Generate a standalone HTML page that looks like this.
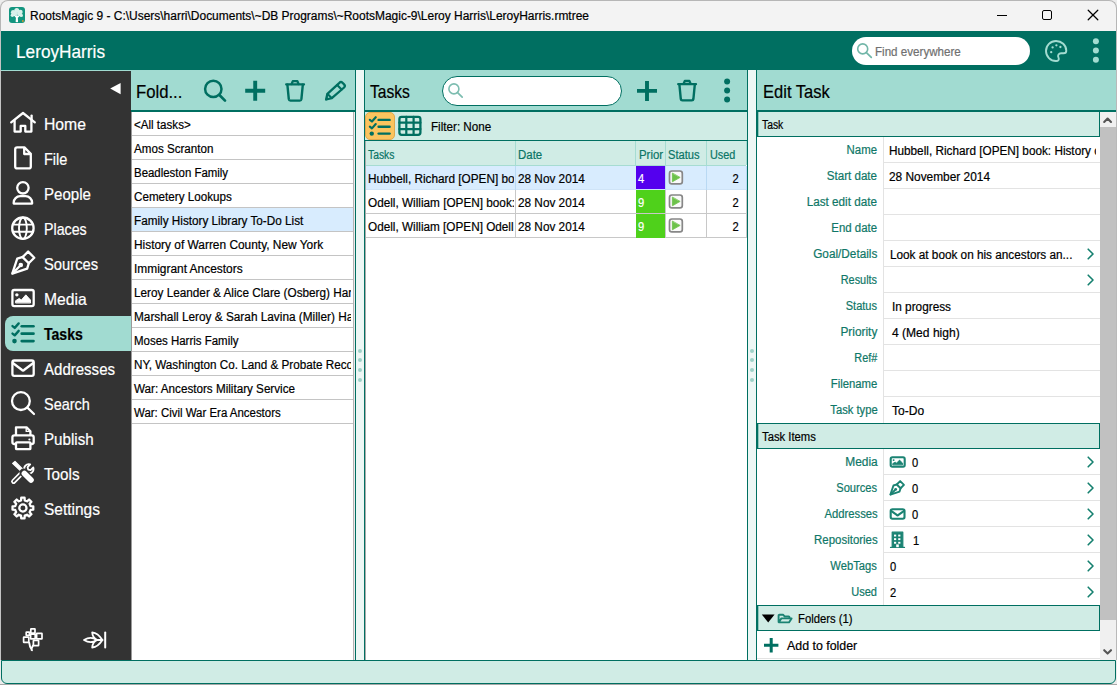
<!DOCTYPE html>
<html><head><meta charset="utf-8"><title>RootsMagic 9</title>
<style>
*{box-sizing:border-box;margin:0;padding:0}
html,body{width:1117px;height:685px;overflow:hidden;background:#ececec}
body{font-family:"Liberation Sans",sans-serif;font-size:12px;color:#000;position:relative}
.a{position:absolute}
.t{position:absolute;white-space:nowrap;line-height:1;transform-origin:0 50%;-webkit-text-stroke:0.2px}
.tr{transform-origin:100% 50%}
svg{position:absolute;overflow:visible}
</style></head><body>
<div class="a" style="left:0px;top:0px;width:1117px;height:31px;background:#f3f3f3;border:1px solid #b6b6b6;border-bottom:none;border-radius:8px 8px 0 0;"></div>
<div class="a" style="left:0px;top:31px;width:1117px;height:39px;background:#006f61;"></div>
<div class="a" style="left:0px;top:70px;width:1117px;height:1px;background:#a1dbd1;"></div>
<div class="a" style="left:0px;top:71px;width:131px;height:589px;background:#333;"></div>
<div class="a" style="left:0px;top:31px;width:1px;height:654px;background:#c4c4c4;"></div>
<div class="a" style="left:5px;top:316px;width:126px;height:35px;background:#a1dbd1;border-radius:8px 0 0 8px;"></div>
<div class="a" style="left:852px;top:37px;width:178px;height:28px;background:#fff;border-radius:14px;"></div>
<div class="a" style="left:131px;top:70px;width:224px;height:40px;background:#a1dbd1;"></div>
<div class="a" style="left:131px;top:110px;width:224px;height:2px;background:#006f61;"></div>
<div class="a" style="left:131px;top:112px;width:223px;height:548px;background:#fff;"></div>
<div class="a" style="left:355px;top:70px;width:1px;height:590px;background:#006f61;"></div>
<div class="a" style="left:353px;top:112px;width:1px;height:548px;background:#b4b4b4;"></div>
<div class="a" style="left:131px;top:112px;width:1px;height:548px;background:#9a9a9a;"></div>
<div class="a" style="left:132px;top:208px;width:221px;height:23px;background:#d8ecfe;"></div>
<div class="a" style="left:132px;top:135px;width:221px;height:1px;background:#c4c4c4;"></div>
<div class="a" style="left:132px;top:159px;width:221px;height:1px;background:#c4c4c4;"></div>
<div class="a" style="left:132px;top:183px;width:221px;height:1px;background:#c4c4c4;"></div>
<div class="a" style="left:132px;top:207px;width:221px;height:1px;background:#c4c4c4;"></div>
<div class="a" style="left:132px;top:231px;width:221px;height:1px;background:#c4c4c4;"></div>
<div class="a" style="left:132px;top:255px;width:221px;height:1px;background:#c4c4c4;"></div>
<div class="a" style="left:132px;top:279px;width:221px;height:1px;background:#c4c4c4;"></div>
<div class="a" style="left:132px;top:303px;width:221px;height:1px;background:#c4c4c4;"></div>
<div class="a" style="left:132px;top:327px;width:221px;height:1px;background:#c4c4c4;"></div>
<div class="a" style="left:132px;top:351px;width:221px;height:1px;background:#c4c4c4;"></div>
<div class="a" style="left:132px;top:375px;width:221px;height:1px;background:#c4c4c4;"></div>
<div class="a" style="left:132px;top:399px;width:221px;height:1px;background:#c4c4c4;"></div>
<div class="a" style="left:132px;top:423px;width:221px;height:1px;background:#c4c4c4;"></div>
<div class="a" style="left:356px;top:70px;width:8px;height:590px;background:#edf7f5;"></div>
<div class="a" style="left:357.7px;top:348.5px;width:4px;height:4px;background:#9fd1c8;border-radius:50%;"></div>
<div class="a" style="left:357.7px;top:358.4px;width:4px;height:4px;background:#9fd1c8;border-radius:50%;"></div>
<div class="a" style="left:357.7px;top:368.4px;width:4px;height:4px;background:#9fd1c8;border-radius:50%;"></div>
<div class="a" style="left:357.7px;top:378.4px;width:4px;height:4px;background:#9fd1c8;border-radius:50%;"></div>
<div class="a" style="left:364px;top:70px;width:1px;height:590px;background:#006f61;"></div>
<div class="a" style="left:365px;top:70px;width:382px;height:40px;background:#a1dbd1;"></div>
<div class="a" style="left:365px;top:110px;width:382px;height:2px;background:#006f61;"></div>
<div class="a" style="left:365px;top:112px;width:382px;height:28px;background:#d0ece5;"></div>
<div class="a" style="left:365px;top:140px;width:382px;height:1px;background:#006f61;"></div>
<div class="a" style="left:365px;top:141px;width:382px;height:519px;background:#fff;"></div>
<div class="a" style="left:365px;top:141px;width:1px;height:519px;background:#aaa;"></div>
<div class="a" style="left:747px;top:70px;width:1px;height:590px;background:#006f61;"></div>
<div class="a" style="left:442px;top:76px;width:180px;height:30px;background:#fff;border-radius:15px;border:1.5px solid #006f61;"></div>
<div class="a" style="left:365px;top:112px;width:30px;height:28px;background:#fbc45e;border-radius:5px;border:1px solid #e0a94f;"></div>
<div class="a" style="left:366px;top:141px;width:380px;height:24px;background:#d0ece5;"></div>
<div class="a" style="left:515px;top:141px;width:1px;height:24px;background:#a6dcd2;"></div>
<div class="a" style="left:635px;top:141px;width:1px;height:24px;background:#a6dcd2;"></div>
<div class="a" style="left:665px;top:141px;width:1px;height:24px;background:#a6dcd2;"></div>
<div class="a" style="left:706px;top:141px;width:1px;height:24px;background:#a6dcd2;"></div>
<div class="a" style="left:746px;top:141px;width:1px;height:24px;background:#a6dcd2;"></div>
<div class="a" style="left:366px;top:165px;width:380px;height:1px;background:#a6dcd2;"></div>
<div class="a" style="left:366px;top:166px;width:380px;height:23px;background:#d8ecfe;"></div>
<div class="a" style="left:366px;top:189px;width:380px;height:1px;background:#cfe4f7;"></div>
<div class="a" style="left:366px;top:213px;width:380px;height:1px;background:#c8c8c8;"></div>
<div class="a" style="left:366px;top:237px;width:380px;height:1px;background:#c8c8c8;"></div>
<div class="a" style="left:515px;top:166px;width:1px;height:24px;background:#b9d9f3;"></div>
<div class="a" style="left:515px;top:190px;width:1px;height:48px;background:#c8c8c8;"></div>
<div class="a" style="left:665px;top:166px;width:1px;height:24px;background:#b9d9f3;"></div>
<div class="a" style="left:665px;top:190px;width:1px;height:48px;background:#c8c8c8;"></div>
<div class="a" style="left:706px;top:166px;width:1px;height:24px;background:#b9d9f3;"></div>
<div class="a" style="left:706px;top:190px;width:1px;height:48px;background:#c8c8c8;"></div>
<div class="a" style="left:746px;top:166px;width:1px;height:24px;background:#b9d9f3;"></div>
<div class="a" style="left:746px;top:190px;width:1px;height:48px;background:#c8c8c8;"></div>
<div class="a" style="left:636px;top:166px;width:29px;height:23px;background:#5400ee;"></div>
<div class="a" style="left:636px;top:190px;width:29px;height:23px;background:#4fd11b;"></div>
<div class="a" style="left:636px;top:214px;width:29px;height:24px;background:#4fd11b;"></div>
<div class="a" style="left:748px;top:70px;width:8px;height:590px;background:#edf7f5;"></div>
<div class="a" style="left:749.7px;top:348.5px;width:4px;height:4px;background:#9fd1c8;border-radius:50%;"></div>
<div class="a" style="left:749.7px;top:358.4px;width:4px;height:4px;background:#9fd1c8;border-radius:50%;"></div>
<div class="a" style="left:749.7px;top:368.4px;width:4px;height:4px;background:#9fd1c8;border-radius:50%;"></div>
<div class="a" style="left:749.7px;top:378.4px;width:4px;height:4px;background:#9fd1c8;border-radius:50%;"></div>
<div class="a" style="left:756px;top:70px;width:1px;height:590px;background:#006f61;"></div>
<div class="a" style="left:757px;top:70px;width:360px;height:40px;background:#a1dbd1;"></div>
<div class="a" style="left:757px;top:110px;width:360px;height:2px;background:#006f61;"></div>
<div class="a" style="left:757px;top:112px;width:343px;height:548px;background:#fff;"></div>
<div class="a" style="left:757px;top:112px;width:343px;height:25px;background:#d0ece5;border:1px solid #006f61;border-top:none;"></div>
<div class="a" style="left:758px;top:112px;width:1px;height:24px;background:#8fc7bd;"></div>
<div class="a" style="left:757px;top:423px;width:343px;height:26px;background:#d0ece5;border:1px solid #006f61;"></div>
<div class="a" style="left:758px;top:424px;width:1px;height:24px;background:#8fc7bd;"></div>
<div class="a" style="left:757px;top:605px;width:343px;height:26px;background:#d0ece5;border:1px solid #006f61;"></div>
<div class="a" style="left:758px;top:606px;width:1px;height:24px;background:#8fc7bd;"></div>
<div class="a" style="left:883px;top:162px;width:217px;height:1px;background:#e3e3e3;"></div>
<div class="a" style="left:883px;top:188px;width:217px;height:1px;background:#e3e3e3;"></div>
<div class="a" style="left:883px;top:214px;width:217px;height:1px;background:#e3e3e3;"></div>
<div class="a" style="left:883px;top:240px;width:217px;height:1px;background:#e3e3e3;"></div>
<div class="a" style="left:883px;top:266px;width:217px;height:1px;background:#e3e3e3;"></div>
<div class="a" style="left:883px;top:292px;width:217px;height:1px;background:#e3e3e3;"></div>
<div class="a" style="left:883px;top:318px;width:217px;height:1px;background:#e3e3e3;"></div>
<div class="a" style="left:883px;top:344px;width:217px;height:1px;background:#e3e3e3;"></div>
<div class="a" style="left:883px;top:370px;width:217px;height:1px;background:#e3e3e3;"></div>
<div class="a" style="left:883px;top:396px;width:217px;height:1px;background:#e3e3e3;"></div>
<div class="a" style="left:883px;top:137px;width:1px;height:286px;background:#e3e3e3;"></div>
<div class="a" style="left:883px;top:474px;width:217px;height:1px;background:#e3e3e3;"></div>
<div class="a" style="left:883px;top:500px;width:217px;height:1px;background:#e3e3e3;"></div>
<div class="a" style="left:883px;top:526px;width:217px;height:1px;background:#e3e3e3;"></div>
<div class="a" style="left:883px;top:552px;width:217px;height:1px;background:#e3e3e3;"></div>
<div class="a" style="left:883px;top:578px;width:217px;height:1px;background:#e3e3e3;"></div>
<div class="a" style="left:883px;top:449px;width:1px;height:156px;background:#e3e3e3;"></div>
<div class="a" style="left:757px;top:658px;width:343px;height:1px;background:#e3e3e3;"></div>
<div class="a" style="left:1100px;top:112px;width:16px;height:548px;background:#f0f0f0;"></div>
<div class="a" style="left:1100px;top:127px;width:16px;height:493px;background:#c1c1c1;"></div>
<div class="a" style="left:1116px;top:31px;width:1px;height:654px;background:#b9b9b9;"></div>
<div class="a" style="left:0px;top:660px;width:1117px;height:25px;background:#ececec;"></div>
<div class="a" style="left:1px;top:660px;width:1115px;height:24px;background:#d0ece5;border:1px solid #006f61;border-radius:0 0 6px 6px;"></div>
<div class="a" style="left:0px;top:684px;width:1117px;height:1px;background:#a8a8a8;"></div>
<span class="t" id="t0" style="top:10.00px;font-size:12px;color:#000;left:30.00px;transform:scaleX(0.9967);">RootsMagic 9 - C:\Users\harri\Documents\~DB Programs\~RootsMagic-9\Leroy Harris\LeroyHarris.rmtree</span>
<span class="t" id="t1" style="top:43.00px;font-size:18.5px;color:#fff;left:16.40px;transform:scaleX(0.9309);">LeroyHarris</span>
<span class="t" id="t2" style="top:46.00px;font-size:12px;color:#707070;left:874.90px;transform:scaleX(0.9671);">Find everywhere</span>
<span class="t" id="t3" style="top:116.00px;font-size:16.2px;color:#fff;left:43.70px;transform:scaleX(0.9725);">Home</span>
<span class="t" id="t4" style="top:151.00px;font-size:16.2px;color:#fff;left:43.70px;transform:scaleX(0.8968);">File</span>
<span class="t" id="t5" style="top:186.00px;font-size:16.2px;color:#fff;left:43.70px;transform:scaleX(0.9304);">People</span>
<span class="t" id="t6" style="top:221.00px;font-size:16.2px;color:#fff;left:43.70px;transform:scaleX(0.8787);">Places</span>
<span class="t" id="t7" style="top:256.00px;font-size:16.2px;color:#fff;left:43.70px;transform:scaleX(0.9109);">Sources</span>
<span class="t" id="t8" style="top:291.00px;font-size:16.2px;color:#fff;left:43.70px;transform:scaleX(0.9684);">Media</span>
<span class="t" id="t9" style="top:326.00px;font-size:16.2px;color:#000;font-weight:bold;left:43.80px;transform:scaleX(0.8679);">Tasks</span>
<span class="t" id="t10" style="top:361.00px;font-size:16.2px;color:#fff;left:43.70px;transform:scaleX(0.9283);">Addresses</span>
<span class="t" id="t11" style="top:396.00px;font-size:16.2px;color:#fff;left:43.70px;transform:scaleX(0.8928);">Search</span>
<span class="t" id="t12" style="top:431.00px;font-size:16.2px;color:#fff;left:43.70px;transform:scaleX(0.9361);">Publish</span>
<span class="t" id="t13" style="top:466.00px;font-size:16.2px;color:#fff;left:43.70px;transform:scaleX(0.9392);">Tools</span>
<span class="t" id="t14" style="top:501.00px;font-size:16.2px;color:#fff;left:43.70px;transform:scaleX(0.9556);">Settings</span>
<span class="t" id="t15" style="top:83.00px;font-size:18.5px;color:#000;left:136.20px;transform:scaleX(0.9023);">Fold...</span>
<div class="a" style="left:132px;top:116.00px;width:219px;height:20px;overflow:hidden"><span class="t" id="t16" style="top:3.00px;font-size:12px;color:#000;left:1.70px;transform:scaleX(0.9659);">&lt;All tasks&gt;</span></div>
<div class="a" style="left:132px;top:140.00px;width:219px;height:20px;overflow:hidden"><span class="t" id="t17" style="top:3.00px;font-size:12px;color:#000;left:1.70px;transform:scaleX(0.9677);">Amos Scranton</span></div>
<div class="a" style="left:132px;top:164.00px;width:219px;height:20px;overflow:hidden"><span class="t" id="t18" style="top:3.00px;font-size:12px;color:#000;left:1.70px;transform:scaleX(0.9532);">Beadleston Family</span></div>
<div class="a" style="left:132px;top:188.00px;width:219px;height:20px;overflow:hidden"><span class="t" id="t19" style="top:3.00px;font-size:12px;color:#000;left:1.70px;transform:scaleX(0.9710);">Cemetery Lookups</span></div>
<div class="a" style="left:132px;top:212.00px;width:219px;height:20px;overflow:hidden"><span class="t" id="t20" style="top:3.00px;font-size:12px;color:#000;left:1.70px;transform:scaleX(0.9777);">Family History Library To-Do List</span></div>
<div class="a" style="left:132px;top:236.00px;width:219px;height:20px;overflow:hidden"><span class="t" id="t21" style="top:3.00px;font-size:12px;color:#000;left:1.70px;transform:scaleX(0.9914);">History of Warren County, New York</span></div>
<div class="a" style="left:132px;top:260.00px;width:219px;height:20px;overflow:hidden"><span class="t" id="t22" style="top:3.00px;font-size:12px;color:#000;left:1.70px;transform:scaleX(0.9929);">Immigrant Ancestors</span></div>
<div class="a" style="left:132px;top:284.00px;width:219px;height:20px;overflow:hidden"><span class="t" id="t23" style="top:3.00px;font-size:12px;color:#000;left:1.70px;transform:scaleX(0.9794);">Leroy Leander &amp; Alice Clare (Osberg) Harris</span></div>
<div class="a" style="left:132px;top:308.00px;width:219px;height:20px;overflow:hidden"><span class="t" id="t24" style="top:3.00px;font-size:12px;color:#000;left:1.70px;transform:scaleX(0.9845);">Marshall Leroy &amp; Sarah Lavina (Miller) Harris</span></div>
<div class="a" style="left:132px;top:332.00px;width:219px;height:20px;overflow:hidden"><span class="t" id="t25" style="top:3.00px;font-size:12px;color:#000;left:1.70px;transform:scaleX(0.9557);">Moses Harris Family</span></div>
<div class="a" style="left:132px;top:356.00px;width:219px;height:20px;overflow:hidden"><span class="t" id="t26" style="top:3.00px;font-size:12px;color:#000;left:1.70px;transform:scaleX(0.9741);">NY, Washington Co. Land &amp; Probate Records</span></div>
<div class="a" style="left:132px;top:380.00px;width:219px;height:20px;overflow:hidden"><span class="t" id="t27" style="top:3.00px;font-size:12px;color:#000;left:1.70px;transform:scaleX(0.9723);">War: Ancestors Military Service</span></div>
<div class="a" style="left:132px;top:404.00px;width:219px;height:20px;overflow:hidden"><span class="t" id="t28" style="top:3.00px;font-size:12px;color:#000;left:1.70px;transform:scaleX(0.9538);">War: Civil War Era Ancestors</span></div>
<span class="t" id="t29" style="top:83.00px;font-size:18.5px;color:#000;left:370.30px;transform:scaleX(0.8436);">Tasks</span>
<span class="t" id="t30" style="top:121.00px;font-size:12px;color:#000;left:431.20px;transform:scaleX(0.9705);">Filter: None</span>
<span class="t" id="t31" style="top:149.00px;font-size:12px;color:#0a7566;left:368.20px;transform:scaleX(0.8635);">Tasks</span>
<span class="t" id="t32" style="top:149.00px;font-size:12px;color:#0a7566;left:518.20px;transform:scaleX(0.9543);">Date</span>
<span class="t" id="t33" style="top:149.00px;font-size:12px;color:#0a7566;left:638.60px;transform:scaleX(0.9509);">Prior</span>
<span class="t" id="t34" style="top:149.00px;font-size:12px;color:#0a7566;left:668.30px;transform:scaleX(0.9286);">Status</span>
<span class="t" id="t35" style="top:149.00px;font-size:12px;color:#0a7566;left:709.60px;transform:scaleX(0.9066);">Used</span>
<div class="a" style="left:366px;top:170.00px;width:148px;height:20px;overflow:hidden"><span class="t" id="t36" style="top:3.00px;font-size:12px;color:#000;left:2.00px;transform:scaleX(0.9812);">Hubbell, Richard [OPEN] book: History</span></div>
<span class="t" id="t37" style="top:173.00px;font-size:12px;color:#000;left:518.10px;transform:scaleX(0.9815);">28 Nov 2014</span>
<span class="t" id="t38" style="top:173.00px;font-size:12px;color:#fff;left:638.00px;transform:scaleX(0.9300);">4</span>
<span class="t tr" id="t39" style="top:173.00px;font-size:12px;color:#000;right:378.40px;transform:scaleX(0.9300);">2</span>
<div class="a" style="left:366px;top:194.00px;width:148px;height:20px;overflow:hidden"><span class="t" id="t40" style="top:3.00px;font-size:12px;color:#000;left:2.00px;transform:scaleX(0.9801);">Odell, William [OPEN] book: History</span></div>
<span class="t" id="t41" style="top:197.00px;font-size:12px;color:#000;left:518.10px;transform:scaleX(0.9815);">28 Nov 2014</span>
<span class="t" id="t42" style="top:197.00px;font-size:12px;color:#fff;left:638.00px;transform:scaleX(0.9300);">9</span>
<span class="t tr" id="t43" style="top:197.00px;font-size:12px;color:#000;right:378.40px;transform:scaleX(0.9300);">2</span>
<div class="a" style="left:366px;top:218.00px;width:148px;height:20px;overflow:hidden"><span class="t" id="t44" style="top:3.00px;font-size:12px;color:#000;left:2.00px;transform:scaleX(0.9791);">Odell, William [OPEN] Odell Genealogy</span></div>
<span class="t" id="t45" style="top:221.00px;font-size:12px;color:#000;left:518.10px;transform:scaleX(0.9815);">28 Nov 2014</span>
<span class="t" id="t46" style="top:221.00px;font-size:12px;color:#fff;left:638.00px;transform:scaleX(0.9300);">9</span>
<span class="t tr" id="t47" style="top:221.00px;font-size:12px;color:#000;right:378.40px;transform:scaleX(0.9300);">2</span>
<span class="t" id="t48" style="top:83.00px;font-size:18.5px;color:#000;left:763.00px;transform:scaleX(0.8938);">Edit Task</span>
<span class="t" id="t49" style="top:119.00px;font-size:12px;color:#000;left:762.30px;transform:scaleX(0.8628);">Task</span>
<span class="t" id="t50" style="top:431.00px;font-size:12px;color:#000;left:762.30px;transform:scaleX(0.9397);">Task Items</span>
<span class="t" id="t51" style="top:613.00px;font-size:12px;color:#000;left:798.40px;transform:scaleX(0.9394);">Folders (1)</span>
<span class="t" id="t52" style="top:640.00px;font-size:12px;color:#000;left:787.40px;transform:scaleX(1.0316);">Add to folder</span>
<span class="t tr" id="t53" style="top:144.00px;font-size:12px;color:#0f7767;right:239.80px;transform:scaleX(0.9495);">Name</span>
<span class="t tr" id="t54" style="top:170.00px;font-size:12px;color:#0f7767;right:239.80px;transform:scaleX(0.9667);">Start date</span>
<span class="t tr" id="t55" style="top:196.00px;font-size:12px;color:#0f7767;right:239.80px;transform:scaleX(0.9769);">Last edit date</span>
<span class="t tr" id="t56" style="top:222.00px;font-size:12px;color:#0f7767;right:239.80px;transform:scaleX(0.9512);">End date</span>
<span class="t tr" id="t57" style="top:248.00px;font-size:12px;color:#0f7767;right:239.80px;transform:scaleX(0.9820);">Goal/Details</span>
<span class="t tr" id="t58" style="top:274.00px;font-size:12px;color:#0f7767;right:239.80px;transform:scaleX(0.9071);">Results</span>
<span class="t tr" id="t59" style="top:300.00px;font-size:12px;color:#0f7767;right:239.80px;transform:scaleX(0.9197);">Status</span>
<span class="t tr" id="t60" style="top:326.00px;font-size:12px;color:#0f7767;right:239.80px;transform:scaleX(0.9881);">Priority</span>
<span class="t tr" id="t61" style="top:352.00px;font-size:12px;color:#0f7767;right:239.80px;transform:scaleX(0.9070);">Ref#</span>
<span class="t tr" id="t62" style="top:378.00px;font-size:12px;color:#0f7767;right:239.80px;transform:scaleX(0.9441);">Filename</span>
<span class="t tr" id="t63" style="top:404.00px;font-size:12px;color:#0f7767;right:239.80px;transform:scaleX(0.9349);">Task type</span>
<span class="t tr" id="t64" style="top:456.00px;font-size:12px;color:#0f7767;right:239.80px;transform:scaleX(0.9943);">Media</span>
<span class="t tr" id="t65" style="top:482.00px;font-size:12px;color:#0f7767;right:239.80px;transform:scaleX(0.9266);">Sources</span>
<span class="t tr" id="t66" style="top:508.00px;font-size:12px;color:#0f7767;right:239.80px;transform:scaleX(0.9382);">Addresses</span>
<span class="t tr" id="t67" style="top:534.00px;font-size:12px;color:#0f7767;right:239.80px;transform:scaleX(0.9535);">Repositories</span>
<span class="t tr" id="t68" style="top:560.00px;font-size:12px;color:#0f7767;right:239.80px;transform:scaleX(0.9335);">WebTags</span>
<span class="t tr" id="t69" style="top:586.00px;font-size:12px;color:#0f7767;right:239.80px;transform:scaleX(0.9209);">Used</span>
<div class="a" style="left:884px;top:142.00px;width:212px;height:20px;overflow:hidden"><span class="t" id="t70" style="top:3.00px;font-size:12px;color:#000;left:4.50px;transform:scaleX(0.9801);">Hubbell, Richard [OPEN] book: History of</span></div>
<span class="t" id="t71" style="top:171.00px;font-size:12px;color:#000;left:888.50px;transform:scaleX(0.9894);">28 November 2014</span>
<span class="t" id="t72" style="top:249.00px;font-size:12px;color:#000;left:889.60px;transform:scaleX(0.9800);">Look at book on his ancestors an...</span>
<span class="t" id="t73" style="top:301.00px;font-size:12px;color:#000;left:892.10px;transform:scaleX(0.9828);">In progress</span>
<span class="t" id="t74" style="top:327.00px;font-size:12px;color:#000;left:892.10px;transform:scaleX(1.0048);">4 (Med high)</span>
<span class="t" id="t75" style="top:405.00px;font-size:12px;color:#000;left:892.10px;transform:scaleX(1.0026);">To-Do</span>
<span class="t" id="t76" style="top:457.00px;font-size:12px;color:#000;left:912.00px;transform:scaleX(0.9300);">0</span>
<span class="t" id="t77" style="top:483.00px;font-size:12px;color:#000;left:912.00px;transform:scaleX(0.9300);">0</span>
<span class="t" id="t78" style="top:509.00px;font-size:12px;color:#000;left:912.00px;transform:scaleX(0.9300);">0</span>
<span class="t" id="t79" style="top:535.00px;font-size:12px;color:#000;left:912.50px;transform:scaleX(0.9300);">1</span>
<span class="t" id="t80" style="top:561.00px;font-size:12px;color:#000;left:889.60px;transform:scaleX(0.9300);">0</span>
<span class="t" id="t81" style="top:587.00px;font-size:12px;color:#000;left:889.60px;transform:scaleX(0.9300);">2</span>
<svg width="1117" height="685" viewBox="0 0 1117 685" style="left:0;top:0"><rect x="9" y="7" width="16" height="16" rx="3" fill="#12957f"/>
<path d="M16.3,21.5 L16.6,17.5 L14,14.5 M17.4,21.5 L17.2,17.5 L20,14.8 M16.9,17.5 V13" fill="none" stroke="#fff" stroke-width="1.3" stroke-linecap="round" stroke-linejoin="round" />
<circle cx="13.2" cy="12.2" r="2.3" fill="#d8f0ea"/>
<circle cx="16.8" cy="10.6" r="2.5" fill="#d8f0ea"/>
<circle cx="20.4" cy="12" r="2.3" fill="#d8f0ea"/>
<circle cx="12.4" cy="15.3" r="1.7" fill="#d8f0ea"/>
<circle cx="21.3" cy="15.4" r="1.7" fill="#d8f0ea"/>
<circle cx="15" cy="13.5" r="1.8" fill="#d8f0ea"/>
<circle cx="19" cy="13.6" r="1.8" fill="#d8f0ea"/>
<rect x="22" y="20.2" width="1.6" height="1.6" rx="0" fill="#d89a2b"/>
<path d="M997,15.5 H1007" fill="none" stroke="#000" stroke-width="1" stroke-linecap="round" stroke-linejoin="round" shape-rendering="crispEdges"/>
<rect x="1042.5" y="10.5" width="9" height="9" rx="1.5" fill="none" stroke="#000" stroke-width="1"/>
<path d="M1088.2,10.2 L1097.8,19.8 M1097.8,10.2 L1088.2,19.8" fill="none" stroke="#000" stroke-width="1.25" stroke-linecap="round" stroke-linejoin="round" />
<circle cx="862.7" cy="48.9" r="5" fill="none" stroke="#72b6a8" stroke-width="1.6"/>
<path d="M866.4,52.6 L871.3,57.4" fill="none" stroke="#72b6a8" stroke-width="1.7" stroke-linecap="round" stroke-linejoin="round" />
<path d="M1056,41 a10,10 0 1 0 0,20 c2.6,0 3.3,-1.8 2.5,-3.4 c-1.2,-2.4 0.3,-4.3 2.6,-4.3 h2.4 c1.7,0 2.8,-1.1 2.8,-2.6 C1066.3,45.2 1061.6,41 1056,41 Z" fill="none" stroke="#a3dcd1" stroke-width="1.9" stroke-linecap="round" stroke-linejoin="round" />
<circle cx="1051.2" cy="52.2" r="1.15" fill="#a3dcd1"/>
<circle cx="1052.6" cy="47.4" r="1.15" fill="#a3dcd1"/>
<circle cx="1056.4" cy="45.3" r="1.15" fill="#a3dcd1"/>
<circle cx="1060.4" cy="47" r="1.15" fill="#a3dcd1"/>
<circle cx="1095.9" cy="41.3" r="3" fill="#a3dcd1"/>
<circle cx="1095.9" cy="50.5" r="3" fill="#a3dcd1"/>
<circle cx="1095.9" cy="59.7" r="3" fill="#a3dcd1"/>
<path d="M110.2,88.6 L120.6,83 V94.2 Z" fill="#fff" />
<path d="M11.2,122.4 L23,113 L34.8,122.4" fill="none" stroke="#fff" stroke-width="2.3" stroke-linecap="round" stroke-linejoin="round" />
<path d="M14.6,120.6 V131.6 H20.7 V125.9 H25.3 V131.6 H31.4 V120.6" fill="none" stroke="#fff" stroke-width="2.3" stroke-linecap="round" stroke-linejoin="round" />
<path d="M31.6,119.4 V115.6" fill="none" stroke="#fff" stroke-width="2.3" stroke-linecap="round" stroke-linejoin="round" />
<path d="M17.2,147.4 H24.4 L30.8,153.8 V166.4 a2,2 0 0 1 -2,2 H17.2 a2,2 0 0 1 -2,-2 V149.4 a2,2 0 0 1 2,-2 Z M24.2,147.6 V154 H30.6" fill="none" stroke="#fff" stroke-width="2.3" stroke-linecap="round" stroke-linejoin="round" />
<circle cx="22.9" cy="187.8" r="5.7" fill="none" stroke="#fff" stroke-width="2.3"/>
<path d="M13.7,203.6 V202.6 a6.4,6.4 0 0 1 6.4,-6.4 H25.7 a6.4,6.4 0 0 1 6.4,6.4 V203.6 Z" fill="none" stroke="#fff" stroke-width="2.3" stroke-linecap="round" stroke-linejoin="round" />
<circle cx="22.9" cy="228.2" r="10.7" fill="none" stroke="#fff" stroke-width="2.3"/>
<ellipse cx="22.9" cy="228.2" rx="3.9" ry="10.7" fill="none" stroke="#fff" stroke-width="1.9"/>
<path d="M13,224.6 H32.8 M13,231.8 H32.8" fill="none" stroke="#fff" stroke-width="1.9" stroke-linecap="round" stroke-linejoin="round" />
<path d="M28.13,251.59 L34.27,257.73 L28.72,263.27 L22.59,257.14 Z" fill="none" stroke="#fff" stroke-width="2.3" stroke-linecap="round" stroke-linejoin="round" />
<path d="M22.98,256.94 L17.24,258.72 L12.29,273.57 L27.14,268.62 L28.92,262.88" fill="none" stroke="#fff" stroke-width="2.3" stroke-linecap="round" stroke-linejoin="round" />
<path d="M12.69,273.17 L19.42,266.44" fill="none" stroke="#fff" stroke-width="2.3" stroke-linecap="round" stroke-linejoin="round" />
<circle cx="20.804000000000002" cy="265.05600000000004" r="2.2769999999999997" fill="#fff"/>
<rect x="12.4" y="290" width="21.3" height="16.2" rx="1.8399999999999999" fill="none" stroke="#fff" stroke-width="2.3"/>
<circle cx="16.873" cy="294.86" r="1.7009999999999998" fill="#fff"/>
<path d="M15.60,302.64 L15.60,300.69 L19.22,298.42 L21.35,300.04 L25.82,294.86 L30.51,300.04 L30.51,302.64 Z" fill="#fff" stroke="#fff" stroke-width="0.9199999999999999" stroke-linecap="round" stroke-linejoin="round" />
<path d="M21.70,326.20 H33.50" fill="none" stroke="#006f61" stroke-width="2.6" stroke-linecap="round" stroke-linejoin="round" />
<path d="M21.70,333.65 H33.50" fill="none" stroke="#006f61" stroke-width="2.6" stroke-linecap="round" stroke-linejoin="round" />
<path d="M21.70,341.10 H33.50" fill="none" stroke="#006f61" stroke-width="2.6" stroke-linecap="round" stroke-linejoin="round" />
<path d="M12.50,326.10 L14.70,327.90 L18.70,323.40" fill="none" stroke="#006f61" stroke-width="2.3400000000000003" stroke-linecap="round" stroke-linejoin="round" />
<path d="M12.50,333.55 L14.70,335.35 L18.70,330.85" fill="none" stroke="#006f61" stroke-width="2.3400000000000003" stroke-linecap="round" stroke-linejoin="round" />
<circle cx="14.5" cy="341.09999999999997" r="2.3" fill="#006f61"/>
<rect x="12.4" y="360.5" width="21.3" height="15.4" rx="1.8399999999999999" fill="none" stroke="#fff" stroke-width="2.3"/>
<path d="M12.80,362.96 L21.77,369.74 Q23.05,371.28 24.33,369.74 L33.30,362.96" fill="none" stroke="#fff" stroke-width="2.3" stroke-linecap="round" stroke-linejoin="round" />
<circle cx="20.9" cy="401.1" r="8.9" fill="none" stroke="#fff" stroke-width="2.3"/>
<path d="M27.4,407.6 L34,414" fill="none" stroke="#fff" stroke-width="2.2" stroke-linecap="round" stroke-linejoin="round" />
<path d="M16,434.8 V427.4 H26.6 L30.4,431.2 V434.8" fill="none" stroke="#fff" stroke-width="2.3" stroke-linecap="round" stroke-linejoin="round" />
<path d="M26.2,427.6 V431.4 H30.2" fill="none" stroke="#fff" stroke-width="1.4" stroke-linecap="round" stroke-linejoin="round" />
<rect x="12.4" y="435.4" width="21.3" height="8.6" rx="2" fill="none" stroke="#fff" stroke-width="2.3"/>
<rect x="16" y="442.4" width="14.4" height="6.8" rx="0.8" fill="#333" stroke="#fff" stroke-width="2.3"/>
<circle cx="29.4" cy="439.5" r="1.1" fill="#fff"/>
<path d="M13.6,481.4 L22.2,472.8" fill="none" stroke="#fff" stroke-width="5" stroke-linecap="round" stroke-linejoin="round" />
<path d="M13.6,481.4 L22.2,472.8" fill="none" stroke="#333" stroke-width="1.6" stroke-linecap="round" stroke-linejoin="round" />
<path d="M24.6,470.6 a4.6,4.6 0 0 1 5.6,-6.2 l-2.6,2.8 l0.6,2.4 l2.4,0.6 l2.7,-2.7 a4.6,4.6 0 0 1 -6.1,5.7 Z" fill="none" stroke="#fff" stroke-width="1.8" stroke-linecap="round" stroke-linejoin="round" />
<path d="M12.6,463.4 L15,461.4 L24,470.4 L22.4,472.6 Z" fill="#fff" stroke="#fff" stroke-width="1.2" stroke-linecap="round" stroke-linejoin="round" />
<path d="M23.6,472.6 L31.6,480.6" fill="none" stroke="#333" stroke-width="8.4" stroke-linecap="round" stroke-linejoin="round" />
<path d="M24.4,473.4 L31,480" fill="none" stroke="#fff" stroke-width="5.6" stroke-linecap="round" stroke-linejoin="round" />
<path d="M21.26,497.63 L24.54,497.63 L24.74,500.32 L27.03,501.26 L29.07,499.51 L31.39,501.83 L29.64,503.87 L30.58,506.16 L33.27,506.36 L33.27,509.64 L30.58,509.84 L29.64,512.13 L31.39,514.17 L29.07,516.49 L27.03,514.74 L24.74,515.68 L24.54,518.37 L21.26,518.37 L21.06,515.68 L18.77,514.74 L16.73,516.49 L14.41,514.17 L16.16,512.13 L15.22,509.84 L12.53,509.64 L12.53,506.36 L15.22,506.16 L16.16,503.87 L14.41,501.83 L16.73,499.51 L18.77,501.26 L21.06,500.32 Z" fill="none" stroke="#fff" stroke-width="2.3" stroke-linecap="round" stroke-linejoin="round" />
<circle cx="22.9" cy="508" r="3.6" fill="none" stroke="#fff" stroke-width="2.3"/>
<rect x="30.8" y="628.9" width="4.2" height="4.2" rx="0.4" fill="none" stroke="#fff" stroke-width="1.7"/>
<rect x="26.2" y="632.2" width="3.2" height="3.2" rx="0.4" fill="none" stroke="#fff" stroke-width="1.7"/>
<rect x="36.6" y="633.4" width="5.4" height="5.4" rx="0.4" fill="none" stroke="#fff" stroke-width="1.7"/>
<rect x="23.6" y="637.2" width="5.2" height="5.2" rx="0.4" fill="none" stroke="#fff" stroke-width="1.7"/>
<rect x="30.6" y="634.2" width="4.6" height="4.6" rx="0.4" fill="none" stroke="#fff" stroke-width="1.7"/>
<rect x="33.4" y="640.4" width="5.2" height="5.2" rx="0.4" fill="none" stroke="#fff" stroke-width="1.7"/>
<path d="M29.2,642.6 Q29.6,647.4 32,650.2 M33,645.6 Q31.2,648 31.6,650" fill="none" stroke="#fff" stroke-width="1.9" stroke-linecap="round" stroke-linejoin="round" />
<path d="M105.2,632.4 V647.6" fill="none" stroke="#fff" stroke-width="2" stroke-linecap="round" stroke-linejoin="round" />
<path d="M102.6,640 H97 M102.4,640 C99.6,635.6 96.4,632.8 92.2,632.4 C92.4,636 94.2,638.8 97.4,640 C94.2,641.2 92.4,644 92.2,647.6 C96.4,647.2 99.6,644.4 102.4,640 M96.6,640 C93,637.4 88,637.6 84,640 C88,642.4 93,642.6 96.6,640" fill="none" stroke="#fff" stroke-width="1.8" stroke-linecap="round" stroke-linejoin="round" />
<circle cx="213.3" cy="88.9" r="8.2" fill="none" stroke="#006f61" stroke-width="2.5"/>
<path d="M219.4,95 L225,100.6" fill="none" stroke="#006f61" stroke-width="2.7" stroke-linecap="round" stroke-linejoin="round" />
<path d="M245.2,90.8 H265.2 M255.2,80.8 V100.8" fill="none" stroke="#006f61" stroke-width="3.9" stroke-linecap="butt"/>
<path d="M286.2,84.4 H304" fill="none" stroke="#006f61" stroke-width="2.3" stroke-linecap="round" stroke-linejoin="round" />
<path d="M291.6,84.0 L292.8,81.2 H297.4 L298.6,84.0" fill="none" stroke="#006f61" stroke-width="2.3" stroke-linecap="round" stroke-linejoin="round" />
<path d="M287.4,84.8 L288.8,99.2 a1.6,1.6 0 0 0 1.6,1.4 H299.8 a1.6,1.6 0 0 0 1.6,-1.4 L302.8,84.8" fill="none" stroke="#006f61" stroke-width="2.4" stroke-linecap="round" stroke-linejoin="round" />
<path d="M326.1,99.5 L327.4,93.8 L339.4,82.8 a2.2,2.2 0 0 1 3.1,0 L344.1,84.4 a2.2,2.2 0 0 1 0,3.1 L331.8,98.2 Z" fill="none" stroke="#006f61" stroke-width="2.3" stroke-linecap="round" stroke-linejoin="round" />
<path d="M327.6,94.0 L331.6,98.0 M337.2,85.0 L341.6,89.4" fill="none" stroke="#006f61" stroke-width="2.1" stroke-linecap="round" stroke-linejoin="round" />
<path d="M326.1,99.5 L326.6,97.0 L328.6,99.0 Z" fill="#006f61" stroke="#006f61" stroke-width="1" stroke-linecap="round" stroke-linejoin="round" />
<circle cx="453.9" cy="88.9" r="5" fill="none" stroke="#7dbdb0" stroke-width="1.6"/>
<path d="M457.6,92.6 L462.2,97.2" fill="none" stroke="#7dbdb0" stroke-width="1.7" stroke-linecap="round" stroke-linejoin="round" />
<path d="M637,90.9 H657 M647,80.9 V100.9" fill="none" stroke="#006f61" stroke-width="3.9" stroke-linecap="butt"/>
<path d="M678.2,84.2 H696" fill="none" stroke="#006f61" stroke-width="2.3" stroke-linecap="round" stroke-linejoin="round" />
<path d="M683.6,83.8 L684.8,81 H689.4 L690.6,83.8" fill="none" stroke="#006f61" stroke-width="2.3" stroke-linecap="round" stroke-linejoin="round" />
<path d="M679.4,84.6 L680.8,99 a1.6,1.6 0 0 0 1.6,1.4 H691.8 a1.6,1.6 0 0 0 1.6,-1.4 L694.8,84.6" fill="none" stroke="#006f61" stroke-width="2.4" stroke-linecap="round" stroke-linejoin="round" />
<circle cx="727.1" cy="81.5" r="3" fill="#006f61"/>
<circle cx="727.1" cy="90.4" r="3" fill="#006f61"/>
<circle cx="727.1" cy="99.4" r="3" fill="#006f61"/>
<path d="M378.60,119.90 H389.60" fill="none" stroke="#006f61" stroke-width="2.4" stroke-linecap="round" stroke-linejoin="round" />
<path d="M378.60,126.75 H389.60" fill="none" stroke="#006f61" stroke-width="2.4" stroke-linecap="round" stroke-linejoin="round" />
<path d="M378.60,133.60 H389.60" fill="none" stroke="#006f61" stroke-width="2.4" stroke-linecap="round" stroke-linejoin="round" />
<path d="M369.86,119.80 L371.95,121.52 L375.75,117.24" fill="none" stroke="#006f61" stroke-width="2.16" stroke-linecap="round" stroke-linejoin="round" />
<path d="M369.86,126.65 L371.95,128.37 L375.75,124.09" fill="none" stroke="#006f61" stroke-width="2.16" stroke-linecap="round" stroke-linejoin="round" />
<circle cx="371.76000000000005" cy="133.6" r="2.1849999999999996" fill="#006f61"/>
<rect x="399.4" y="116.9" width="21" height="17.9" rx="2.2" fill="none" stroke="#006f61" stroke-width="2.3"/>
<path d="M406.3,116.9 V134.8 M413.6,116.9 V134.8 M399.4,122.7 H420.4 M399.4,129.1 H420.4" fill="none" stroke="#006f61" stroke-width="2.2" stroke-linecap="round" stroke-linejoin="round" />
<rect x="669.5" y="171" width="12.8" height="12.9" rx="2.4" fill="#fafafa" stroke="#878787" stroke-width="1.7"/>
<path d="M672.4,173.4 V181.8 L679.8,177.6 Z" fill="#6cc24a" stroke="#6cc24a" stroke-width="0.8" stroke-linecap="round" stroke-linejoin="round" />
<rect x="669.5" y="195" width="12.8" height="12.9" rx="2.4" fill="#fafafa" stroke="#878787" stroke-width="1.7"/>
<path d="M672.4,197.4 V205.8 L679.8,201.6 Z" fill="#6cc24a" stroke="#6cc24a" stroke-width="0.8" stroke-linecap="round" stroke-linejoin="round" />
<rect x="669.5" y="219" width="12.8" height="12.9" rx="2.4" fill="#fafafa" stroke="#878787" stroke-width="1.7"/>
<path d="M672.4,221.4 V229.8 L679.8,225.6 Z" fill="#6cc24a" stroke="#6cc24a" stroke-width="0.8" stroke-linecap="round" stroke-linejoin="round" />
<path d="M1088.2,249.2 L1093,254 L1088.2,258.8" fill="none" stroke="#15806f" stroke-width="1.6" stroke-linecap="round" stroke-linejoin="round" />
<path d="M1088.2,275.2 L1093,280 L1088.2,284.8" fill="none" stroke="#15806f" stroke-width="1.6" stroke-linecap="round" stroke-linejoin="round" />
<path d="M1088.2,457.2 L1093,462 L1088.2,466.8" fill="none" stroke="#15806f" stroke-width="1.6" stroke-linecap="round" stroke-linejoin="round" />
<path d="M1088.2,483.2 L1093,488 L1088.2,492.8" fill="none" stroke="#15806f" stroke-width="1.6" stroke-linecap="round" stroke-linejoin="round" />
<path d="M1088.2,509.2 L1093,514 L1088.2,518.8" fill="none" stroke="#15806f" stroke-width="1.6" stroke-linecap="round" stroke-linejoin="round" />
<path d="M1088.2,535.2 L1093,540 L1088.2,544.8" fill="none" stroke="#15806f" stroke-width="1.6" stroke-linecap="round" stroke-linejoin="round" />
<path d="M1088.2,561.2 L1093,566 L1088.2,570.8" fill="none" stroke="#15806f" stroke-width="1.6" stroke-linecap="round" stroke-linejoin="round" />
<path d="M1088.2,587.2 L1093,592 L1088.2,596.8" fill="none" stroke="#15806f" stroke-width="1.6" stroke-linecap="round" stroke-linejoin="round" />
<rect x="890.7" y="457.3" width="14" height="9.4" rx="1.6800000000000002" fill="none" stroke="#1b8373" stroke-width="2.1"/>
<circle cx="893.6400000000001" cy="460.12" r="0.987" fill="#1b8373"/>
<path d="M892.80,464.63 L892.80,463.50 L895.18,462.19 L896.58,463.13 L899.52,460.12 L902.60,463.13 L902.60,464.63 Z" fill="#1b8373" stroke="#1b8373" stroke-width="0.8400000000000001" stroke-linecap="round" stroke-linejoin="round" />
<path d="M900.17,481.09 L903.95,484.87 L900.54,488.29 L896.75,484.50 Z" fill="none" stroke="#1b8373" stroke-width="1.9" stroke-linecap="round" stroke-linejoin="round" />
<path d="M897.00,484.38 L893.46,485.48 L890.41,494.63 L899.56,491.58 L900.66,488.04" fill="none" stroke="#1b8373" stroke-width="1.9" stroke-linecap="round" stroke-linejoin="round" />
<path d="M890.65,494.39 L894.80,490.24" fill="none" stroke="#1b8373" stroke-width="1.9" stroke-linecap="round" stroke-linejoin="round" />
<circle cx="895.656" cy="489.384" r="1.4029999999999998" fill="#1b8373"/>
<rect x="890.7" y="509.3" width="13.8" height="9.4" rx="1.6800000000000002" fill="none" stroke="#1b8373" stroke-width="2.1"/>
<path d="M891.10,510.80 L896.77,514.94 Q897.60,515.88 898.43,514.94 L904.10,510.80" fill="none" stroke="#1b8373" stroke-width="2.1" stroke-linecap="round" stroke-linejoin="round" />
<path d="M892.2,532.2 H902.8 V546.6 H892.2 Z" fill="#1b8373" stroke="#1b8373" stroke-width="1.2" stroke-linecap="round" stroke-linejoin="round" />
<path d="M890.6,547.4 H904.4" fill="none" stroke="#1b8373" stroke-width="1.4" stroke-linecap="round" stroke-linejoin="round" />
<rect x="894.0" y="534.6" width="2.2" height="1.9" rx="0" fill="#fff"/>
<rect x="898.2" y="534.6" width="2.2" height="1.9" rx="0" fill="#fff"/>
<rect x="894.0" y="538.2" width="2.2" height="1.9" rx="0" fill="#fff"/>
<rect x="898.2" y="538.2" width="2.2" height="1.9" rx="0" fill="#fff"/>
<rect x="894.0" y="541.8000000000001" width="2.2" height="1.9" rx="0" fill="#fff"/>
<rect x="898.2" y="541.8000000000001" width="2.2" height="1.9" rx="0" fill="#fff"/>
<rect x="896.2" y="544.4" width="2.6" height="2.8" rx="0" fill="#fff"/>
<path d="M761.8,614.6 H774.6 L768.2,622.6 Z" fill="#000" />
<path d="M778.6,622 V615.6 a0.9,0.9 0 0 1 0.9,-0.9 H783 L784.6,616.4 H788.6 a0.9,0.9 0 0 1 0.9,0.9 V618 M778.8,622.2 L781.4,618.4 H791.6 L789,622.4 H779 Z" fill="none" stroke="#1b8373" stroke-width="1.9" stroke-linecap="round" stroke-linejoin="round" />
<path d="M764.0,645.2 H778.4000000000001 M771.2,638.0 V652.4000000000001" fill="none" stroke="#006f61" stroke-width="3" stroke-linecap="butt"/>
<path d="M1104.2,122 L1107.6,118.6 L1111,122" fill="none" stroke="#555" stroke-width="2.1" stroke-linecap="round" stroke-linejoin="round" />
<path d="M1104.2,650.2 L1107.6,653.6 L1111,650.2" fill="none" stroke="#555" stroke-width="2.1" stroke-linecap="round" stroke-linejoin="round" /></svg>
</body></html>
